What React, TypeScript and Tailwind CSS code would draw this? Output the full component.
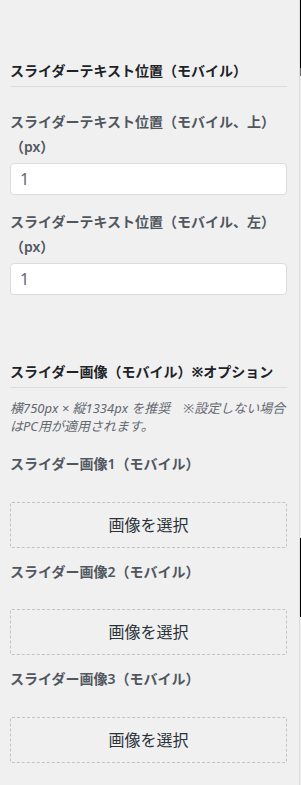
export default function App() {
  const font = { fontFamily: '"Noto Sans", "Noto Sans CJK JP", sans-serif' };
  const label = "block text-[14px] leading-[24.5px] font-semibold text-[#50575e]";
  const heading = "text-[14px] leading-[20px] font-bold text-[#1d2327] pb-[5px] border-b border-[#dcdcde]";
  const button =
    "w-full h-[46px] border border-dashed border-[#c3c4c7] rounded-[2px] flex items-center justify-center text-[16px] text-[#2c3338]";
  const input =
    "w-full h-[32px] bg-white border border-[#dcdcde] rounded-[4px] pl-[9px] text-[16px] text-[#646970] flex items-center";
  return (
    <div className="flex w-[301px] h-[785px] bg-[#f0f0f1] overflow-hidden" style={font}>
      <div className="w-[300px] h-full border-r border-[#dcdcde] pl-[10px] pr-[12px] flex flex-col">
        <div className="h-[61px]" />
        <div className={heading}>スライダーテキスト位置（モバイル）</div>
        <div className="h-[23px]" />
        <span className={label}>スライダーテキスト位置（モバイル、上）（px）</span>
        <div className="h-[4px]" />
        <div className={input}>1</div>
        <div className="h-[15px]" />
        <span className={label}>スライダーテキスト位置（モバイル、左）（px）</span>
        <div className="h-[4px]" />
        <div className={input}>1</div>
        <div className="h-[67px]" />
        <div className={heading}>スライダー画像（モバイル）※オプション</div>
        <div className="h-[11px]" />
        <p className="text-[13px] leading-[18px] italic text-[#646970]">
          横750px × 縦1334px を推奨　※設定しない場合はPC用が適用されます。
        </p>
        <div className="h-[17px]" />
        <span className={label}>スライダー画像1（モバイル）</span>
        <div className="h-[25px]" />
        <div className={button}>画像を選択</div>
        <div className="h-[12px]" />
        <span className={label}>スライダー画像2（モバイル）</span>
        <div className="h-[25px]" />
        <div className={button}>画像を選択</div>
        <div className="h-[12px]" />
        <span className={label}>スライダー画像3（モバイル）</span>
        <div className="h-[25px]" />
        <div className={button}>画像を選択</div>
      </div>
      <div className="w-[1px] h-full flex flex-col">
        <div className="h-[68px] bg-black" />
        <div className="h-[8px] bg-[#6b6b6b]" />
        <div className="h-[462px] bg-[#f0f0f1]" />
        <div className="h-[79px] bg-black" />
        <div className="flex-1 bg-[#f0f0f1]" />
      </div>
    </div>
  );
}
